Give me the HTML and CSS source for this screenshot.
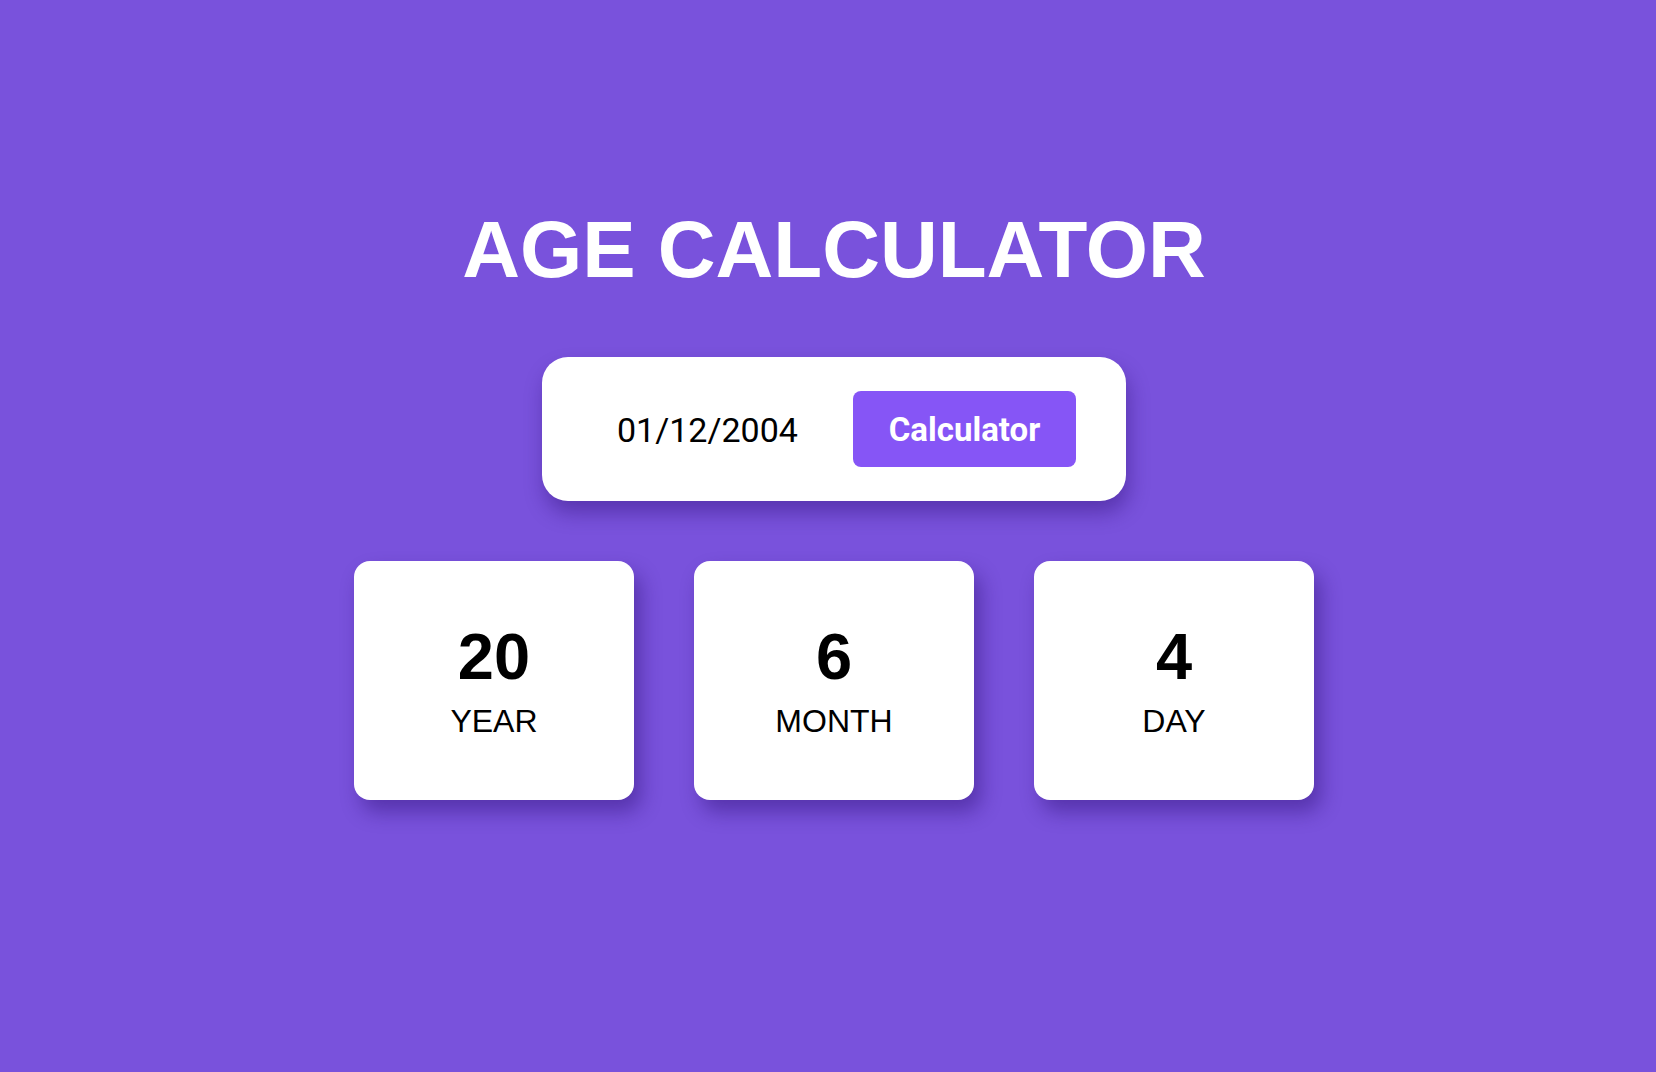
FILE: index.html
```html
<!DOCTYPE html>
<html lang="en">
<head>
<meta charset="utf-8">
<title>Age Calculator</title>
<link rel="stylesheet" href="styles.css">
</head>
<body>
<main class="app">
  <h1 class="title">AGE CALCULATOR</h1>
  <div class="input-card">
    <input class="date-input" type="text" value="01/12/2004">
    <button class="calc-btn" type="button">Calculator</button>
  </div>
  <div class="results">
    <div class="result-card">
      <div class="result-num">20</div>
      <div class="result-label">YEAR</div>
    </div>
    <div class="result-card">
      <div class="result-num">6</div>
      <div class="result-label">MONTH</div>
    </div>
    <div class="result-card">
      <div class="result-num">4</div>
      <div class="result-label">DAY</div>
    </div>
  </div>
</main>
</body>
</html>
```
FILE: styles.css
```css
html, body {
  margin: 0;
  padding: 0;
}
body {
  background: #7952dc;
  font-family: "Liberation Sans", Arial, sans-serif;
  min-height: 100vh;
}
.app {
  display: flex;
  flex-direction: column;
  align-items: center;
  padding: 210px 0 0 12px;
}
.title {
  margin: 0;
  color: #ffffff;
  font-size: 80px;
  font-weight: 700;
  line-height: 1;
}
.input-card {
  margin-top: 67px;
  width: 584px;
  height: 144px;
  box-sizing: border-box;
  background: #ffffff;
  border-radius: 26px;
  display: flex;
  align-items: center;
  justify-content: space-between;
  padding: 0 50px 0 75px;
  box-shadow: 3px 12px 20px rgba(45, 15, 115, 0.42);
}
.date-input {
  border: none;
  outline: none;
  background: transparent;
  padding: 0;
  margin-top: 2px;
  width: 200px;
  font-family: Roboto, "Liberation Sans", sans-serif;
  font-size: 34px;
  color: #000;
}
.calc-btn {
  width: 223px;
  height: 76px;
  border: none;
  border-radius: 8px;
  background: #8655f6;
  color: #ffffff;
  font-family: Roboto, "Liberation Sans", sans-serif;
  font-weight: 700;
  font-size: 33px;
  padding: 0;
}
.results {
  margin-top: 60px;
  display: flex;
  gap: 60px;
}
.result-card {
  width: 280px;
  height: 239px;
  background: #ffffff;
  border-radius: 16px;
  display: flex;
  flex-direction: column;
  align-items: center;
  justify-content: center;
  gap: 16px;
  box-shadow: 7px 12px 20px rgba(45, 15, 115, 0.45);
}
.result-num {
  font-size: 65px;
  font-weight: 700;
  line-height: 1;
  color: #000;
}
.result-label {
  font-size: 32px;
  line-height: 1;
  color: #000;
}
```
